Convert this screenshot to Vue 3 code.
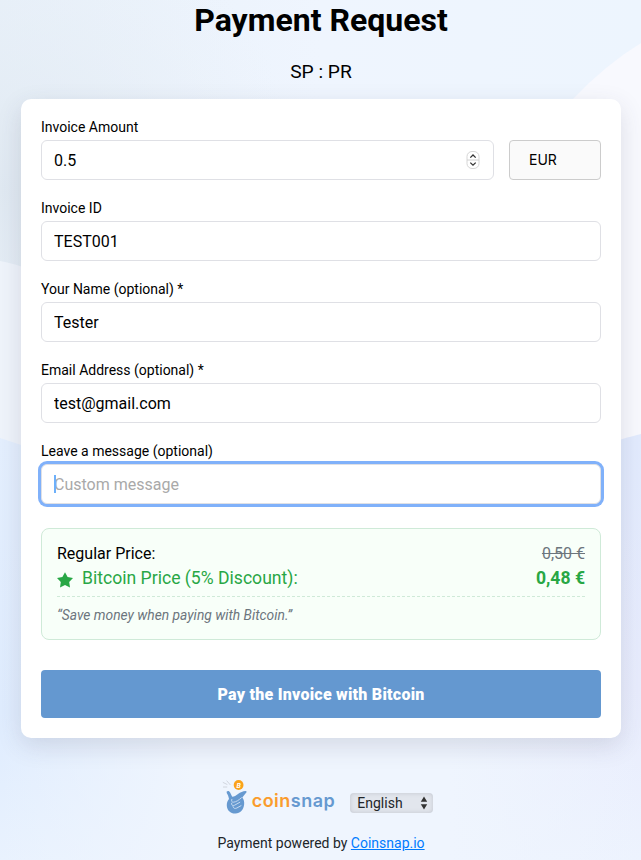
<template>
  <div class="page">
    <svg class="backdrop" viewBox="0 0 641 860" preserveAspectRatio="none" aria-hidden="true">
      <defs>
        <linearGradient id="bg-base" x1="0" y1="0" x2="1" y2="0">
          <stop offset="0" stop-color="#e8f1fa" />
          <stop offset="0.5" stop-color="#eff5fe" />
          <stop offset="1" stop-color="#edf5fe" />
        </linearGradient>
        <radialGradient id="bg-grey" gradientUnits="userSpaceOnUse" cx="0" cy="190" r="300">
          <stop offset="0" stop-color="#e0e9f2" />
          <stop offset="1" stop-color="#e9eff6" stop-opacity="0" />
        </radialGradient>
        <linearGradient id="bg-left" x1="0" y1="0" x2="0" y2="1">
          <stop offset="0" stop-color="#e4effe" />
          <stop offset="0.65" stop-color="#dfecfe" />
          <stop offset="1" stop-color="#e9f2fe" />
        </linearGradient>
        <linearGradient id="bg-right" x1="0" y1="0" x2="0" y2="1">
          <stop offset="0" stop-color="#e2ebfe" />
          <stop offset="0.6" stop-color="#e8ecfd" />
          <stop offset="1" stop-color="#edf3fe" />
        </linearGradient>
        <linearGradient id="bg-fade" x1="0" y1="0" x2="1" y2="0">
          <stop offset="0" stop-color="#eff5fe" stop-opacity="0" />
          <stop offset="0.3" stop-color="#eff5fe" />
          <stop offset="0.7" stop-color="#eff5fe" />
          <stop offset="1" stop-color="#eff5fe" stop-opacity="0" />
        </linearGradient>
      </defs>
      <rect width="641" height="860" fill="url(#bg-base)" />
      <rect width="641" height="500" fill="url(#bg-grey)" />
      <path d="M641 43Q605 65 573 99V480H641Z" fill="#f8f9fe" />
      <path d="M0 261Q14 263 60 280V480H0Z" fill="#eff4fb" />
      <path d="M0 438Q60 458 320 540V860H0Z" fill="url(#bg-left)" />
      <path d="M641 434Q590 446 320 540V860H641Z" fill="url(#bg-right)" />
      <rect y="540" width="641" height="320" fill="url(#bg-fade)" />
    </svg>

    <main class="content">
      <h1 class="title">Payment Request</h1>
      <p class="subtitle">SP : PR</p>

      <form class="card" @submit.prevent>
        <div class="row">
          <div class="field amount">
            <label for="amount">Invoice Amount</label>
            <div class="input-wrap">
              <input id="amount" v-model="form.amount" type="text" />
              <svg class="stepper" viewBox="0 0 14 20">
                <rect x="1" y="1.5" width="12" height="17" rx="5" fill="#fff" stroke="#d6d6d6" />
                <path d="M1 10H13" stroke="#d0d0d0" />
                <path d="M4.3 7.6L7 5L9.7 7.6M4.3 12.6L7 15.2L9.7 12.6" fill="none" stroke="#333" stroke-width="1.3" />
              </svg>
            </div>
          </div>
          <div class="currency">EUR</div>
        </div>

        <div v-for="field in fields" :key="field.id" class="field">
          <label :for="field.id">{{ field.label }}</label>
          <input :id="field.id" v-model="form[field.id]" type="text" />
        </div>

        <div class="field">
          <label for="message">Leave a message (optional)</label>
          <div class="input-wrap">
            <input id="message" v-model="form.message" class="focused" type="text" placeholder="Custom message" />
            <span class="caret"></span>
          </div>
        </div>

        <section class="discount">
          <div class="price regular">
            <span>Regular Price:</span>
            <span class="old">0,50 €</span>
          </div>
          <div class="price bitcoin">
            <svg class="star" viewBox="0 0 16 16">
              <path d="M8 0.2L10.6 5L16 6L12.2 9.9L13 15.4L8 13L3 15.4L3.8 9.9L0 6L5.4 5Z" fill="#28a745" />
            </svg>
            <span>Bitcoin Price (5% Discount):</span>
            <strong>0,48 €</strong>
          </div>
          <p class="quote">“Save money when paying with Bitcoin.”</p>
        </section>

        <button class="pay" type="submit">Pay the Invoice with Bitcoin</button>
      </form>

      <footer class="footer">
        <div class="brand-row">
          <div class="brand">
            <svg class="logo" viewBox="0 0 26 36">
              <path d="M0.8 3.3L5.4 5.6M4.6 1.6L8.4 6M1 8L5.2 8" fill="none" stroke="#c9cdd6" stroke-width="0.8" />
              <circle cx="16.6" cy="6" r="4.9" fill="#faa21b" />
              <text x="16.6" y="8.5" class="coin-mark">B</text>
              <path d="M4.7 12.6C5.9 11.4 7.5 12 8.1 13.6L10.2 17.8C12.2 17.6 14.1 16.6 16 15C18.4 13 21 12.1 23.4 11.9C24.8 11.8 25 12.9 24.1 13.8L20.3 18.4C21.8 20 22.5 22.8 22.1 25.8C21.5 31 18.3 34.3 13.5 34.5C8.4 34.6 5 31.2 4.8 26.7C4.7 24 5.4 21.8 7 20C6.6 17.4 5.7 15.6 4.7 14Z" fill="#6699d0" />
              <path d="M9.8 20.4C9.2 22.2 9.8 23.3 11.4 23.2C14.2 23 16.6 21.2 19.4 18.8M9.6 24.2C9.2 26.3 10.6 27 12.6 26.2L17.8 23.3M11 27.6C11.4 29.6 13.2 29.8 14.8 29L19 26.7" fill="none" stroke="#dce9f8" stroke-width="0.8" stroke-linecap="round" />
            </svg>
            <span class="wordmark"><span class="coin">coin</span>snap</span>
          </div>
          <div class="language">
            <span>English</span>
            <svg class="arrows" viewBox="0 0 8 14">
              <path d="M4 0.6L7.2 5.7H0.8ZM4 13.4L7.2 8.3H0.8Z" fill="#333" />
            </svg>
          </div>
        </div>
        <p class="powered">Payment powered by <a href="#">Coinsnap.io</a></p>
      </footer>
    </main>
  </div>
</template>

<script setup>
import { reactive } from 'vue'

const form = reactive({
  amount: '0.5',
  invoice: 'TEST001',
  name: 'Tester',
  email: 'test@gmail.com',
  message: '',
})

const fields = [
  { id: 'invoice', label: 'Invoice ID' },
  { id: 'name', label: 'Your Name (optional) *' },
  { id: 'email', label: 'Email Address (optional) *' },
]
</script>

<style>
body {
  margin: 0;
  background: #eff5fe;
}
</style>

<style scoped>
.page {
  position: relative;
  height: 860px;
  overflow: hidden;
  font-family: Roboto, "Liberation Sans", sans-serif;
  color: #000;
}

.backdrop {
  position: absolute;
  inset: 0;
  width: 100%;
  height: 100%;
}

.content {
  position: relative;
  padding: 0 20px 0 21px;
}

.title {
  margin: 0;
  font-size: 32px;
  line-height: 40px;
  font-weight: 700;
  text-align: center;
}

.subtitle {
  margin: 19px 0 15px;
  font-size: 19.2px;
  line-height: 25px;
  text-align: center;
}

.card {
  box-sizing: border-box;
  height: 639px;
  padding: 18px 20px 20px;
  border-radius: 10px;
  background: #fff;
  box-shadow: 0 8px 24px rgba(60, 60, 90, 0.15);
}

.row {
  display: flex;
  align-items: flex-start;
  gap: 15px;
}

.amount {
  flex: 1;
}

.field {
  height: 81px;
}

label {
  display: block;
  height: 23px;
  font-size: 14px;
  line-height: 20px;
}

.input-wrap {
  position: relative;
}

input {
  display: block;
  box-sizing: border-box;
  width: 100%;
  height: 40px;
  padding: 0 12px;
  border: 1px solid #dfe0e5;
  border-radius: 6px;
  outline: none;
  background: #fff;
  font: 16px Roboto, sans-serif;
  color: #000;
}

input::placeholder {
  color: #a9a9a9;
  opacity: 1;
}

.focused {
  box-shadow: 0 0 0 3px #80b1fa;
}

.caret {
  position: absolute;
  left: 13px;
  top: 11px;
  width: 2px;
  height: 18px;
  background: #6db0fa;
}

.stepper {
  position: absolute;
  top: 10px;
  right: 14px;
  width: 14px;
  height: 20px;
}

.currency {
  box-sizing: border-box;
  width: 92px;
  height: 40px;
  margin-top: 23px;
  padding-left: 19px;
  border: 1px solid #ccc;
  border-radius: 4px;
  background: #fafafa;
  font-family: Inter, sans-serif;
  font-size: 14px;
  line-height: 38px;
}

.discount {
  box-sizing: border-box;
  height: 112px;
  margin-top: 6px;
  padding: 13px 15px;
  border: 1px solid #cfead8;
  border-radius: 8px;
  background: #f8fff9;
}

.price {
  display: flex;
  align-items: center;
}

.regular {
  justify-content: space-between;
  height: 23px;
  font-size: 16px;
}

.old {
  color: #6c757d;
  text-decoration: line-through;
}

.bitcoin {
  height: 26px;
  font-size: 17.6px;
  color: #28a745;
}

.bitcoin strong {
  margin-left: auto;
}

.star {
  width: 16px;
  height: 16px;
  margin: 4px 9px 0 0;
}

.quote {
  margin: 5px 0 0;
  padding-top: 8px;
  border-top: 1px dashed #cfead8;
  font-size: 13.8px;
  line-height: 20px;
  font-style: italic;
  color: #6c757d;
}

.pay {
  display: block;
  width: 100%;
  height: 48px;
  margin-top: 30px;
  border: 0;
  border-radius: 4px;
  background: #6498d0;
  font: 900 16px Roboto, sans-serif;
  letter-spacing: 0.25px;
  color: #fff;
}

.footer {
  padding-top: 41px;
}

.brand-row {
  display: flex;
  justify-content: center;
  gap: 15px;
  height: 36px;
  padding-left: 13px;
}

.brand {
  display: flex;
}

.logo {
  width: 26px;
  height: 36px;
}

.coin-mark {
  font: italic 700 7px Roboto, sans-serif;
  fill: #fff;
  text-anchor: middle;
}

.wordmark {
  margin: 12px 0 0 4px;
  font: 600 18px/20px Inter, sans-serif;
  letter-spacing: 0.5px;
  color: #6699d0;
}

.coin {
  color: #fa9c2d;
}

.language {
  display: flex;
  align-items: center;
  justify-content: space-between;
  box-sizing: border-box;
  width: 83px;
  height: 20px;
  margin-top: 14px;
  padding: 0 5px 0 7px;
  border-radius: 4px;
  background: #e2e6ed;
  box-shadow: inset 0 0 4px rgba(100, 105, 115, 0.25);
  font-size: 14px;
  color: #212529;
}

.arrows {
  width: 8px;
  height: 14px;
}

.powered {
  margin: 18px 0 0;
  font-size: 14px;
  line-height: 20px;
  text-align: center;
  color: #212529;
}

.powered a {
  color: #007bff;
}
</style>
